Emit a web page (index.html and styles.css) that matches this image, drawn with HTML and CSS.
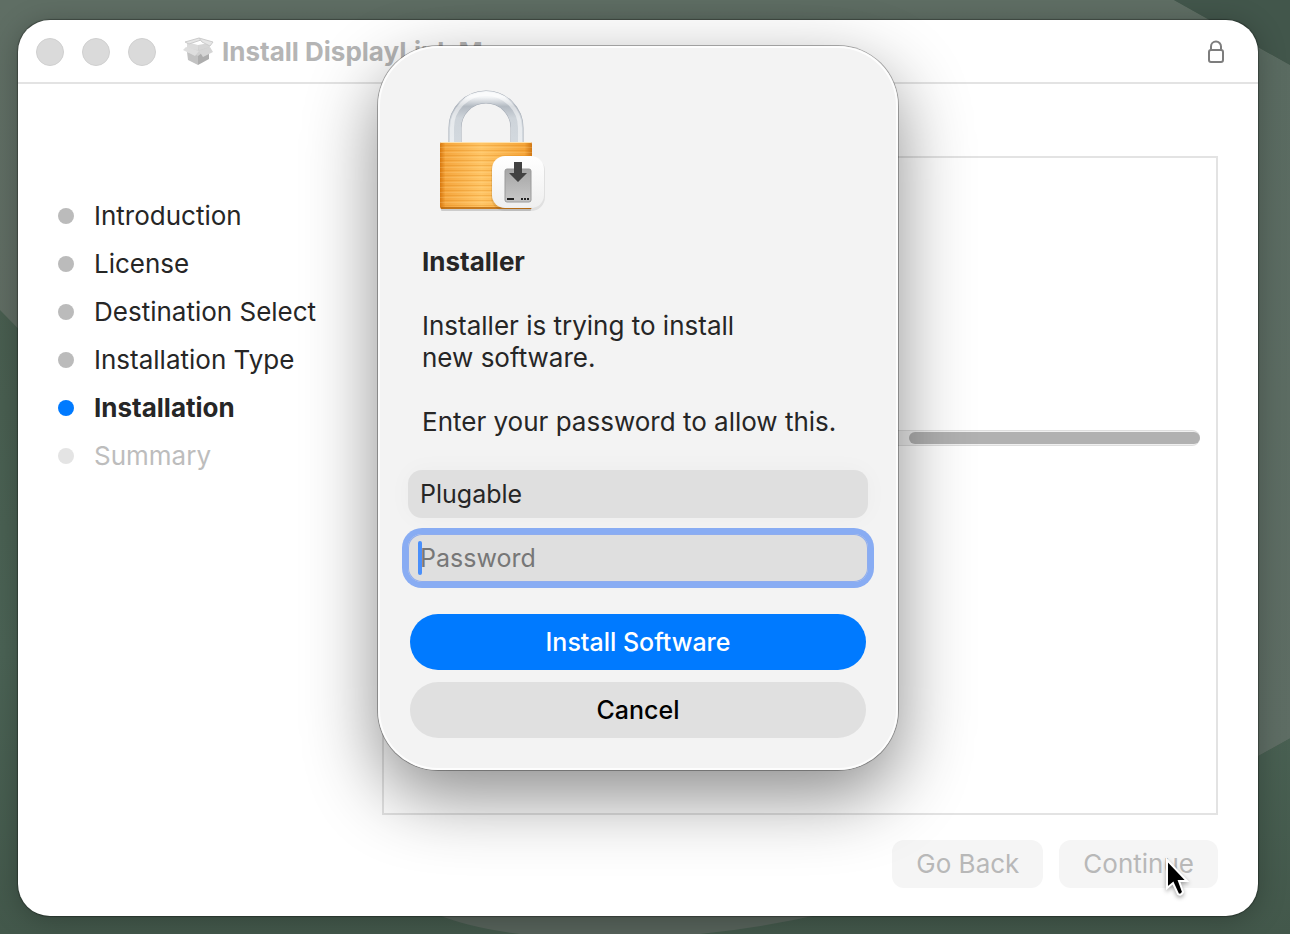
FILE: index.html
```
<!DOCTYPE html>
<html lang="en">
<head>
    <meta charset="UTF-8">
    <title>Install DisplayLink Manager</title>
    <link rel="stylesheet" href="styles.css">
</head>
<body>

<svg class="wallpaper" viewBox="0 0 1290 934" preserveAspectRatio="none" aria-hidden="true">
    <defs>
        <linearGradient id="wallLeft" x1="0" y1="0" x2="0" y2="1">
            <stop offset="0" stop-color="#5f6e64"/>
            <stop offset="1" stop-color="#626a62"/>
        </linearGradient>
        <linearGradient id="wallRight" x1="0" y1="0" x2="0" y2="1">
            <stop offset="0" stop-color="#5a6b61"/>
            <stop offset="1" stop-color="#5e6d64"/>
        </linearGradient>
        <linearGradient id="wallBase" x1="0" y1="0" x2="0" y2="1">
            <stop offset="0.300" stop-color="#485d4f"/>
            <stop offset="0.700" stop-color="#4b6355"/>
            <stop offset="1" stop-color="#43584b"/>
        </linearGradient>
    </defs>
    <rect width="1290" height="934" fill="url(#wallBase)"/>
    <path d="M0 0H1174L1290 65V738L1000 900L400 720L0 310Z" fill="url(#wallLeft)"/>
    <path d="M1250 44L1290 65V738L1250 760Z" fill="url(#wallRight)"/>
    <path d="M1174 0H1290V65Z" fill="#42564b"/>
    <path d="M436 914Q470 928 520 934H700Q760 928 822 914Z" fill="#57635b"/>
</svg>

<main class="window">
    <header class="titlebar">
        <div class="lights">
            <button type="button" class="light" aria-label="Close" disabled></button>
            <button type="button" class="light" aria-label="Minimize" disabled></button>
            <button type="button" class="light" aria-label="Zoom" disabled></button>
        </div>
        <svg class="package-icon" viewBox="0 0 32 30" aria-hidden="true">
            <path d="M5 15L16 17V28L6 23Z" fill="#c2c2c2"/>
            <path d="M16 17L27 14V22L16 28Z" fill="#adadad"/>
            <path d="M5 12L16 8L28 10L16 19Z" fill="#d0d0d0"/>
            <path d="M5 5L16 8V13L5 12Z" fill="#dcdcdc"/>
            <path d="M16 8L27 6L28 10L17 13Z" fill="#d6d6d6"/>
            <path d="M3 5L17 1L19 3L7 7Z" fill="#e6e6e6" stroke="#cccccc"/>
            <path d="M17 1L31 5L28 9L20 5Z" fill="#e6e6e6" stroke="#cccccc"/>
            <path d="M4 10L17 14L13 19L1 13Z" fill="#dedede"/>
            <path d="M17 14L28 10L31 15L21 20Z" fill="#d5d5d5"/>
        </svg>
        <h1 class="window-title">Install DisplayLink Manager</h1>
        <svg class="secure-icon" viewBox="0 0 16 24" aria-hidden="true">
            <rect x="1" y="10" width="14" height="12" rx="2"/>
            <path d="M3 10V6.500a5 5 0 0 1 10 0V10"/>
        </svg>
    </header>

    <div class="content">
        <ol class="steps">
            <li class="step">Introduction</li>
            <li class="step">License</li>
            <li class="step">Destination Select</li>
            <li class="step">Installation Type</li>
            <li class="step current">Installation</li>
            <li class="step pending">Summary</li>
        </ol>
        <div class="pane-column">
            <section class="pane">
                <div class="progress"><div class="progress-bar"></div></div>
            </section>
            <footer class="actions">
                <button type="button" class="nav-button" disabled>Go Back</button>
                <button type="button" class="nav-button" disabled>Continue</button>
            </footer>
        </div>
    </div>

    <form class="dialog" role="dialog" aria-labelledby="dialogTitle">
        <svg class="lock-icon" viewBox="0 0 112 124" aria-hidden="true">
            <defs>
                <linearGradient id="shackle" x1="0" y1="0" x2="0" y2="1">
                    <stop offset="0" stop-color="#f4f6f8"/>
                    <stop offset="0.200" stop-color="#b3bac2"/>
                    <stop offset="0.450" stop-color="#ced4da"/>
                    <stop offset="1" stop-color="#d3d9df"/>
                </linearGradient>
                <linearGradient id="brass" x1="0" y1="0" x2="1" y2="0">
                    <stop offset="0" stop-color="#d8780e"/>
                    <stop offset="0.060" stop-color="#f5a63e"/>
                    <stop offset="0.450" stop-color="#ffc566"/>
                    <stop offset="0.920" stop-color="#f5a53a"/>
                    <stop offset="1" stop-color="#cf7614"/>
                </linearGradient>
                <linearGradient id="drive" x1="0" y1="0" x2="0" y2="1">
                    <stop offset="0" stop-color="#a5a5a5"/>
                    <stop offset="1" stop-color="#c8c8c8"/>
                </linearGradient>
                <linearGradient id="badge" x1="0" y1="0" x2="0" y2="1">
                    <stop offset="0" stop-color="#ffffff"/>
                    <stop offset="1" stop-color="#efefef"/>
                </linearGradient>
                <pattern id="brushed" width="92" height="5" patternUnits="userSpaceOnUse">
                    <rect width="92" height="1" fill="#d9820f" opacity="0.280"/>
                    <rect y="2" width="92" height="1" fill="#ffe0a0" opacity="0.200"/>
                </pattern>
            </defs>
            <path d="M19 54V38a31 31 0 0 1 62 0V54" fill="none" stroke="#a4abb5" stroke-width="13"/>
            <path d="M19 54V38a31 31 0 0 1 62 0V54" fill="none" stroke="url(#shackle)" stroke-width="12"/>
            <path d="M16 54V38a34 34 0 0 1 68 0V54" fill="none" stroke="#ffffff" stroke-width="4" opacity="0.500"/>
            <rect x="5" y="118" width="90" height="3" rx="1" fill="#000000" opacity="0.160"/>
            <rect x="4" y="52" width="92" height="67" rx="2" fill="url(#brass)"/>
            <rect x="4" y="54" width="92" height="63" fill="url(#brushed)"/>
            <rect x="5" y="52" width="90" height="1" fill="#ffe2ad"/>
            <rect x="5" y="117" width="90" height="2" fill="#b9690f" opacity="0.800"/>
            <rect x="55" y="67" width="54" height="54" rx="14" fill="#000000" opacity="0.080"/>
            <rect x="56" y="66" width="52" height="52" rx="13" fill="url(#badge)"/>
            <rect x="69" y="79" width="26" height="33" rx="2" fill="url(#drive)" stroke="#9a9a9a"/>
            <path d="M70 107H94V111H70Z" fill="#c4c4c4"/>
            <path d="M71 109H78" stroke="#222222" stroke-width="2"/>
            <path d="M85 109H94" stroke="#222222" stroke-width="2" stroke-dasharray="2 1"/>
            <path d="M78 72H86V83H91L82 92L73 83H78Z" fill="#414141"/>
        </svg>
        <h2 class="dialog-title" id="dialogTitle">Installer</h2>
        <p class="message">Installer is trying to install<br>new software.</p>
        <p class="message">Enter your password to allow this.</p>
        <div class="fields">
            <input type="text" class="field" aria-label="User name" value="Plugable">
            <div class="field-wrap">
                <input type="password" class="field active" aria-label="Password" placeholder="Password">
                <span class="caret"></span>
            </div>
        </div>
        <div class="dialog-buttons">
            <button type="submit" class="dialog-button primary">Install Software</button>
            <button type="button" class="dialog-button">Cancel</button>
        </div>
    </form>

    <svg class="pointer" viewBox="0 0 26 42" aria-hidden="true">
        <path d="M3 3V31L9 26L14 37Q17 39 19 35L15 24H23Z"/>
    </svg>
</main>

</body>
</html>
```
FILE: styles.css
```
* {
    box-sizing: border-box;
}

body {
    margin: 0;
    min-height: 100vh;
    display: flex;
    padding: 20px 32px 18px 18px;
    font-family: Inter, "Liberation Sans", sans-serif;
    font-size: 26px;
    line-height: 32px;
    color: #262626;
    background-color: #42574a;
}

h1, h2, p, ol {
    margin: 0;
    padding: 0;
}

button, input {
    font: inherit;
    border: none;
}

.wallpaper {
    position: absolute;
    top: 0;
    left: 0;
    width: 100%;
    height: 100%;
}

.window {
    position: relative;
    flex: 1;
    display: flex;
    flex-direction: column;
    background-color: #ffffff;
    border-radius: 32px;
    box-shadow: 0 0 1px 1px rgba(0, 0, 0, 0.3), 0 4px 28px rgba(0, 0, 0, 0.25);
}

.titlebar {
    display: flex;
    align-items: center;
    height: 64px;
    padding: 2px 34px 0 18px;
    border-bottom: 2px solid #e3e3e3;
}

.lights {
    display: flex;
    gap: 18px;
    margin-right: 26px;
}

.light {
    width: 28px;
    height: 28px;
    padding: 0;
    border: 1px solid #d0d0d0;
    border-radius: 50%;
    background-color: #dadada;
}

.package-icon {
    width: 32px;
    height: 30px;
    margin-right: 8px;
}

.window-title {
    flex: 1;
    font-size: 26px;
    font-weight: 700;
    color: #b5b5b5;
}

.secure-icon {
    width: 16px;
    height: 24px;
    fill: none;
    stroke: #7d7d7d;
    stroke-width: 2;
}

.content {
    flex: 1;
    display: flex;
    padding: 72px 40px 28px;
}

.steps {
    width: 324px;
    padding-top: 36px;
    list-style: none;
}

.step {
    display: flex;
    align-items: center;
    gap: 20px;
    height: 48px;
}

.step::before {
    content: "";
    width: 16px;
    height: 16px;
    border-radius: 50%;
    background-color: #bbbbbb;
}

.step.current {
    font-weight: 700;
}

.step.current::before {
    background-color: #007aff;
}

.step.pending {
    color: #bdbdbd;
}

.step.pending::before {
    background-color: #e4e4e4;
}

.pane-column {
    flex: 1;
    display: flex;
    flex-direction: column;
    gap: 25px;
}

.pane {
    flex: 1;
    padding: 272px 16px 0;
    border: 2px solid #e3e3e3;
}

.progress {
    height: 16px;
    border: solid #dedede;
    border-width: 1px 0;
    border-radius: 8px;
    background-color: #f0f0f0;
}

.progress-bar {
    width: 291px;
    height: 12px;
    margin: 1px 0 0 auto;
    border-radius: 6px;
    background-color: #b1b1b1;
}

.actions {
    display: flex;
    justify-content: flex-end;
    gap: 16px;
}

.nav-button {
    height: 48px;
    padding: 0 24px;
    border-radius: 12px;
    background-color: #f5f5f5;
    color: #b8b8b8;
}

/* Authentication sheet, lies over the installer window */
.dialog {
    position: absolute;
    top: 26px;
    left: 50%;
    transform: translateX(-50%);
    width: 520px;
    padding: 44px 30px 32px;
    border-radius: 60px;
    background-color: #f3f3f3;
    box-shadow: inset 0 0 0 2px rgba(255, 255, 255, 0.8), 0 0 0 1px rgba(0, 0, 0, 0.3), 0 26px 72px rgba(0, 0, 0, 0.46);
}

.lock-icon {
    display: block;
    width: 112px;
    height: 124px;
    margin-left: 28px;
}

.dialog-title {
    margin: 32px 14px;
    font-size: 26px;
    font-weight: 700;
}

.message {
    margin: 0 14px 32px;
}

.fields {
    display: flex;
    flex-direction: column;
    gap: 16px;
}

.field-wrap {
    position: relative;
}

.field {
    display: block;
    width: 100%;
    height: 48px;
    padding: 0 12px;
    border-radius: 14px;
    background-color: #dfdfdf;
    color: #262626;
    font-size: 25px;
    box-shadow: 0 0 24px rgba(0, 0, 0, 0.03);
}

.field.active {
    outline: none;
    box-shadow: inset 0 0 0 1px #8eacee, 0 0 0 6px #88acf3;
}

.field::placeholder {
    color: #777777;
    opacity: 1;
}

.caret {
    position: absolute;
    top: 7px;
    left: 10px;
    width: 4px;
    height: 34px;
    border-radius: 2px;
    background-color: #4a8ffa;
}

.dialog-buttons {
    display: flex;
    flex-direction: column;
    gap: 12px;
    padding: 32px 2px 0;
}

.dialog-button {
    height: 56px;
    border-radius: 28px;
    background-color: #e0e0e0;
    color: #000000;
    font-size: 25px;
    font-weight: 500;
}

.dialog-button.primary {
    background-color: #007aff;
    color: #ffffff;
}

.pointer {
    position: absolute;
    right: 68px;
    bottom: 17px;
    width: 26px;
    height: 42px;
    fill: #000000;
    stroke: #ffffff;
    stroke-width: 2;
    filter: drop-shadow(0 2px 2px rgba(0, 0, 0, 0.35));
}
```
